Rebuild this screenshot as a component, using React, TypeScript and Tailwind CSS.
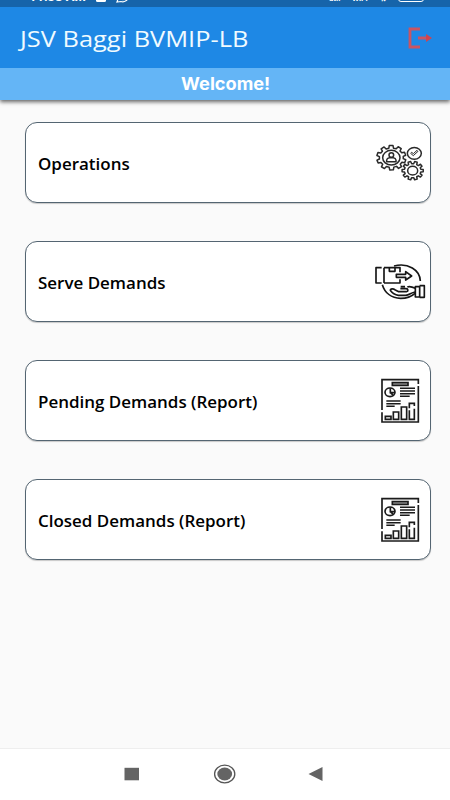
import type { ReactNode } from 'react';

interface MenuItem {
  label: string;
  icon: ReactNode;
}

// Closed outline of a cog wheel; rx and ry are the outer radii
function gearPath(cx: number, cy: number, rx: number, ry: number, teeth: number, depth: number, turn: number) {
  const points: string[] = [];
  const step = (Math.PI * 2) / teeth;
  for (let i = 0; i < teeth; i++) {
    const a = i * step + turn;
    [
      [-0.31, depth],
      [-0.2, 0],
      [0.2, 0],
      [0.31, depth],
    ].forEach(([offset, inset]) => {
      const angle = a + offset * step;
      const x = cx + (rx - inset) * Math.cos(angle);
      const y = cy + (ry - inset) * Math.sin(angle);
      points.push(`${x.toFixed(1)} ${y.toFixed(1)}`);
    });
  }
  return `M${points.join('L')}Z`;
}

function OperationsIcon() {
  return (
    <svg className="h-[60px] w-[58px]" viewBox="12 -6 174 180" fill="none" stroke="#2a2a2a" strokeWidth="4.5" strokeLinejoin="round">
      <path d={gearPath(76, 68, 44, 37, 10, 8, 0.3)} />
      <ellipse cx="76" cy="68" rx="26" ry="22" />
      <ellipse cx="76" cy="60" rx="7" ry="7" />
      <path d="M62 80v-5q1-6 8-7h12q7 1 8 7v5Z" />
      <ellipse cx="145" cy="55" rx="21" ry="17.5" />
      <path d="M134 55l8 7 14-13-3-3-11 10-5-4Z" strokeWidth="3" />
      <path d={gearPath(140, 107, 32, 28, 10, 7, 0)} />
      <ellipse cx="140" cy="107" rx="15" ry="13" />
    </svg>
  );
}

function ServeIcon() {
  return (
    <svg className="h-[60px] w-[58px]" viewBox="12 -6 174 180" fill="none" stroke="#161616" strokeWidth="5" strokeLinejoin="round">
      <path d="M47 41H30v46h17M54 41h48v14M102 76v11H54M54 41v46" />
      <path d="M70 42v10h17V42" />
      <path d="M91 61h28v-8l18 13-18 12v-8H91Z" />
      <path d="M84 36c42-11 78 12 79 45M49 92c7 24 27 40 55 41 18 0 32-5 43-15" />
      <path d="M72 108c5-5 10-4 16 0l10 5h23c7-1 6-9-1-9h-17M72 108c6 8 15 15 25 16h22c11-1 16-8 28-10M104 98h13M124 99c8-4 16 0 24 4" />
      <path d="M148 98h13v31h-13ZM161 95h14v35h-14" />
    </svg>
  );
}

function ReportIcon() {
  return (
    <svg className="h-[60px] w-[58px]" viewBox="12 3 174 180" fill="none" stroke="#1b1b1b" strokeWidth="5">
      <path d="M157 42V29H48v91M48 127v29h109V48" />
      <path d="M79 38h47v8H79Z" fill="#bbb" />
      <ellipse cx="72" cy="67" rx="15" ry="13" />
      <path d="M73 55v13h14M73 68l9 8" />
      <path d="M102 55h45M102 63h45M102 71h45M102 79h29M61 93h43M61 101h43M61 109h25" strokeWidth="4.5" />
      <path d="M58 148v-9h17v9ZM82 148v-22h16v22ZM106 148v-37h16v37ZM130 121v27h15v-32M130 115v-15h15v8" />
    </svg>
  );
}

const items: MenuItem[] = [
  { label: 'Operations', icon: <OperationsIcon /> },
  { label: 'Serve Demands', icon: <ServeIcon /> },
  { label: 'Pending Demands (Report)', icon: <ReportIcon /> },
  { label: 'Closed Demands (Report)', icon: <ReportIcon /> },
];

function StatusBar() {
  return (
    <div className="flex h-[7px] items-end justify-between overflow-hidden bg-[#1664aa] pr-[26px] pl-[29px] font-['Roboto',sans-serif] text-white">
      <div className="flex h-[15px] items-end gap-[10px] pb-[4px]">
        <span className="text-[13px] leading-[13px] font-bold">11:38 AM</span>
        <svg className="h-[12px] w-[10px]" viewBox="0 0 10 12" fill="white">
          <rect width="10" height="11" rx="1.5" />
        </svg>
        <svg className="h-[13px] w-[13px]" viewBox="0 0 13 13" fill="none" stroke="white" strokeWidth="1.2">
          <path d="M1 12l1-3a5.5 5.5 0 1 1 3 2.500ZM4 8q3 3 6 0" />
        </svg>
      </div>
      <div className="flex h-[15px] items-end pb-[4px] text-[8px] leading-[8px] font-bold">
        <span className="w-[23px]">atıl</span>
        <span className="w-[28px]">WiFi</span>
        <span className="w-[18px]">⇅</span>
        <span className="mb-px h-[10px] w-[26px] rounded-[3px] border border-white" />
      </div>
    </div>
  );
}

function Header() {
  return (
    <header className="shadow-[0_2px_4px_rgba(0,0,0,0.6)]">
      <StatusBar />
      <div className="flex h-[61px] items-center justify-between bg-[#1e88e5] pr-[17px] pl-[20px]">
        <h1 className="origin-left scale-x-[1.155] font-['Open_Sans',sans-serif] text-[22px] leading-[30px] whitespace-nowrap text-[#f0fbff]">
          JSV Baggi BVMIP-LB
        </h1>
        <svg className="h-[22px] w-[26px]" viewBox="0 0 26 22" fill="none" stroke="#c95563" strokeWidth="2.8">
          <path d="M13 2H3v18h10M11 11h9" />
          <path d="M19 7l6 4-6 4Z" fill="#d0444f" stroke="none" />
        </svg>
      </div>
      <div className="flex h-8 items-center justify-center bg-[#64b5f6] pt-[2px] pl-px font-['Inter',sans-serif] text-[17px] font-bold text-white">
        <span className="scale-x-[1.07]">Welcome!</span>
      </div>
    </header>
  );
}

function MenuCard({ label, icon }: MenuItem) {
  return (
    <button
      type="button"
      className="flex h-[81px] w-full items-center justify-between rounded-[12px] border border-[#546572] bg-white pr-[2px] pl-[12px] shadow-[0_1px_1px_rgba(0,0,0,0.2)]"
    >
      <span className="origin-left scale-x-[1.06] pt-[2px] font-['Open_Sans',sans-serif] text-base font-semibold whitespace-nowrap text-black">
        {label}
      </span>
      {icon}
    </button>
  );
}

function NavigationBar() {
  return (
    <nav className="flex h-[52px] items-center justify-between border-t border-[#eeeeee] bg-white pr-[127px] pb-px pl-[124px]">
      <svg className="h-[14px] w-[16px]" viewBox="0 0 16 14" fill="#646464">
        <rect x="0.5" y="0.8" width="14.5" height="12.5" />
      </svg>
      <svg className="h-[20px] w-[22px] overflow-visible" viewBox="0 0 22 20" fill="#646464">
        <ellipse cx="11.7" cy="10" rx="10.1" ry="8.9" fill="none" stroke="#555" strokeWidth="1.3" />
        <ellipse cx="11.7" cy="10" rx="7.4" ry="6.5" />
      </svg>
      <svg className="h-[14px] w-[15px]" viewBox="0 0 15 14" fill="#646464">
        <path d="M0.5 7L14.5 0v14Z" />
      </svg>
    </nav>
  );
}

export default function App() {
  return (
    <div className="flex h-[800px] w-[450px] flex-col overflow-hidden bg-[#fafafa]">
      <Header />
      <main className="flex flex-1 flex-col gap-[38px] pt-[22px] pr-[19px] pl-[25px]">
        {items.map((item) => (
          <MenuCard key={item.label} {...item} />
        ))}
      </main>
      <NavigationBar />
    </div>
  );
}
